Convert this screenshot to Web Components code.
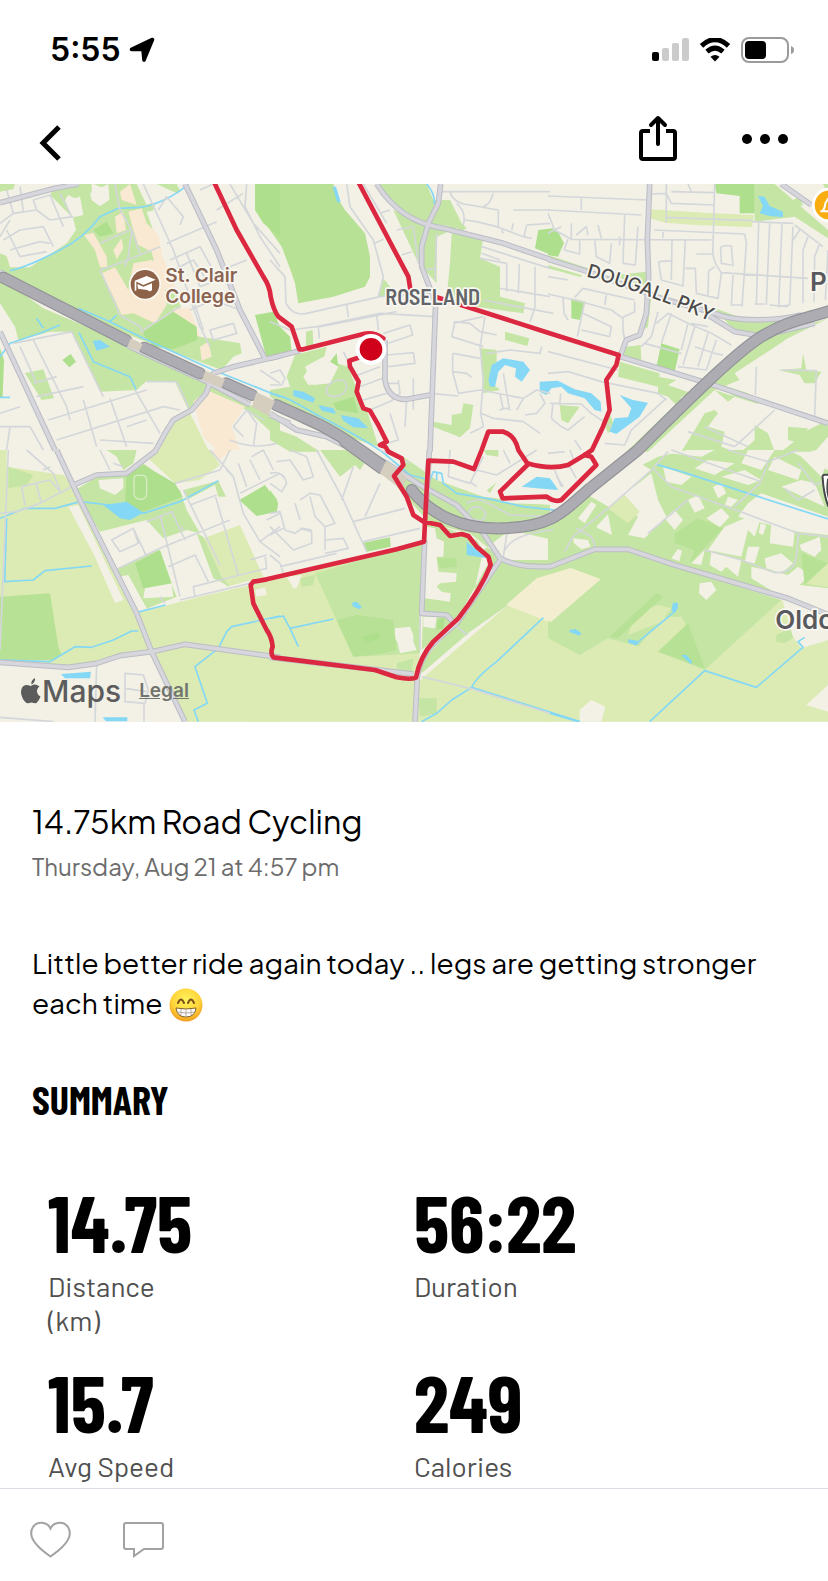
<!DOCTYPE html>
<html lang="en">
<head>
<meta charset="utf-8">
<meta name="viewport" content="width=device-width, initial-scale=1">
<title>14.75km Road Cycling</title>
<style>
    body {
        margin: 0;
        background: #fff;
        color: #000;
        font-family: "Inter", "Liberation Sans", sans-serif;
    }
</style>
</head>
<body>
<workout-page>
    <status-bar time="5:55"></status-bar>
    <nav-bar></nav-bar>
    <route-map></route-map>
    <workout-intro heading="14.75km Road Cycling" date="Thursday, Aug 21 at 4:57 pm">Little better ride again today .. legs are getting stronger each time <grin-face></grin-face></workout-intro>
    <workout-summary heading="Summary">
        <stat-item value="14.75" label="Distance" unit="(km)"></stat-item>
        <stat-item value="56:22" label="Duration"></stat-item>
        <stat-item value="15.7" label="Avg Speed"></stat-item>
        <stat-item value="249" label="Calories"></stat-item>
    </workout-summary>
    <action-bar></action-bar>
</workout-page>

<script>
customElements.define('workout-page', class extends HTMLElement {
    constructor() {
        super();
        this.attachShadow({ mode: 'open' });
    }

    connectedCallback() {
        this.shadowRoot.innerHTML = `
        <style>
            :host {
                display: flex;
                flex-direction: column;
                min-height: 100vh;
            }
        </style>
        <slot></slot>
        `;
    }
});

customElements.define('status-bar', class extends HTMLElement {
    constructor() {
        super();
        this.attachShadow({ mode: 'open' });
    }

    connectedCallback() {
        this.shadowRoot.innerHTML = `
        <style>
            :host {
                display: flex;
                justify-content: space-between;
                align-items: center;
                height: 100px;
                padding: 0 34px 0 50px;
            }
            div {
                display: flex;
                align-items: center;
                gap: 10px;
            }
            .clock { gap: 8px; }
            time {
                font-size: 32px;
                line-height: 40px;
                font-weight: 600;
            }
            svg { display: block; }
        </style>
        <div class="clock">
            <time>${this.getAttribute('time')}</time>
            <svg width="26" height="26" viewBox="0 0 26 26"><path d="M23.500 2.500 L15 23 L14 12.500 L2.500 12.500Z" stroke="#000" stroke-width="3.600" stroke-linejoin="round"/></svg>
        </div>
        <div>
            <svg width="37" height="24" viewBox="0 0 37 24">
                <rect y="14" width="7" height="9" rx="2"/>
                <g fill="#cbcbcb">
                    <rect x="10" y="10" width="7" height="13" rx="2"/>
                    <rect x="20" y="5" width="7" height="18" rx="2"/>
                    <rect x="30" width="7" height="23" rx="2"/>
                </g>
            </svg>
            <svg width="32" height="24" viewBox="0 0 32 24">
                <path d="M2.500 7.800 Q16 -4.500 29.500 7.800 M8 13.600 Q16 6.500 24 13.600" fill="none" stroke="#000" stroke-width="5"/>
                <path d="M16 23.500 L11.500 18.700 Q16 15.200 20.500 18.700Z"/>
            </svg>
            <svg width="53" height="26" viewBox="0 0 53 26">
                <rect x="1" y="1" width="46" height="24" rx="7" fill="none" stroke="#9b9b9b" stroke-width="2"/>
                <rect x="4" y="4" width="21" height="18" rx="4"/>
                <path d="M50 9 Q53 10 53 13 T50 17Z" fill="#9b9b9b"/>
            </svg>
        </div>
        `;
    }
});

customElements.define('nav-bar', class extends HTMLElement {
    constructor() {
        super();
        this.attachShadow({ mode: 'open' });
    }

    connectedCallback() {
        this.shadowRoot.innerHTML = `
        <style>
            :host {
                display: flex;
                justify-content: space-between;
                align-items: center;
                height: 84px;
                padding: 0 40px 0 32px;
            }
            div {
                display: flex;
                gap: 55px;
            }
            button {
                display: block;
                padding: 0;
                border: 0;
                background: none;
                cursor: pointer;
            }
            svg {
                display: block;
                fill: none;
                stroke: #000;
                stroke-width: 4;
            }
        </style>
        <button aria-label="Back"><svg width="40" height="48" viewBox="0 0 40 48"><path d="M27 9 L11 25 L27 41" stroke-width="5"/></svg></button>
        <div>
            <button aria-label="Share"><svg width="44" height="48" viewBox="0 0 44 48" overflow="visible"><path d="M17 13 H10 Q8 13 8 15 V39 Q8 41 10 41 H40 Q42 41 42 39 V15 Q42 13 40 13 H33"/><path d="M25 26 V1 M18 7 L25 0 L32 7" stroke-linecap="round" stroke-linejoin="round"/></svg></button>
            <button aria-label="More"><svg width="56" height="48" viewBox="0 0 56 48"><g fill="#000" stroke="none"><circle cx="15" cy="21" r="5"/><circle cx="33" cy="21" r="5"/><circle cx="51" cy="21" r="5"/></g></svg></button>
        </div>
        `;
    }
});

// Each tile is drawn from its own origin; layers are painted across all tiles in order.
const tiles = [
    {
        x: 0, y: -12,
        park: [
            'M0 12 H45 L40 28 0 35Z M0 220 L20 228 30 262 90 262 200 190 228 150 218 108 248 104 238 62 205 45 195 60 215 110 150 45 160 30 240 12 275 12 275 60 300 78 328 60 325 30 280 12 600 12 530 40 470 12 410 12 465 75 450 118 480 180 530 300 545 390 600 470 720 490 725 520 700 530 665 570 425 480 235 405 0 285Z',
            'M0 292 L130 385 400 500 620 605 760 680 840 720 840 780 740 690 640 655 590 660 565 690 525 605 440 602 410 630 300 635 215 455 150 455 55 480 45 440 0 370Z M75 580 L130 568 162 655 125 660Z'
        ],
        land: [
            'M270 40 L325 12 328 55 300 78 275 60Z M205 60 L240 50 250 105 220 112Z M440 95 L475 90 540 60 590 100 640 250 730 480 600 470 545 390 530 340 490 240Z M530 12 L650 12 800 420 700 470 600 150Z M410 12 H470 L480 60 440 75Z'
        ],
        sand: [
            'M385 95 L425 85 440 130 475 165 490 240 525 300 520 340 480 320 455 215 415 195 400 150Z M345 110 L370 95 378 150 350 160Z M252 165 L280 158 320 230 322 260 300 262 285 210Z M305 280 L345 262 385 330 400 250 455 240 490 260 500 375 465 430 400 400 365 405 335 340Z M360 35 L390 12 410 75 365 60Z M520 385 L570 385 600 470 520 440Z M600 500 L625 485 635 530 605 542Z M340 210 L365 175 370 205 350 238Z',
            'M580 665 L620 630 735 680 695 740 720 810 650 810 610 770Z'
        ],
        farm: ['M495 740 L570 700 625 810 480 810Z'],
        lush: ['M425 458 L520 395 590 440 592 480 520 508 460 500Z M187 540 L212 522 228 545 208 562Z M765 405 L820 395 840 440 840 520 800 535Z M765 12 H840 V170 L790 130 765 90Z M0 505 L12 540 8 650 0 655Z M320 125 L340 160 300 170 280 150Z'],
        lake: ['M278 482 L300 480 330 500 290 512Z'],
        stream: ['M30 272 C80 262 130 235 180 210 S270 150 300 110 L355 85 420 82 C470 75 530 45 565 12 M0 652 H30 M0 530 L30 490 120 460 180 435 M110 415 L130 445 M235 385 L330 425 430 475 640 570 840 650 M330 425 L350 405 M237 458 L280 545 390 590 408 628'],
        street: [
            'M0 130 L40 100 110 90 150 120 M10 180 L60 150 130 140 M30 210 L120 185 150 190 M20 150 L60 230 140 215 M40 100 L20 30 M70 95 L60 20 M110 90 L100 60 150 45 190 140 M0 170 L30 120 M150 120 L220 110 M180 40 L215 110 M130 140 L160 200',
            'M345 12 L360 90 395 150 385 230 375 260 M300 190 L390 150 M300 270 L370 245 480 200 M300 270 L360 405 420 440 430 460 M430 450 L540 380 M395 150 L420 220',
            'M430 12 L520 210 600 440 630 500 M475 90 L500 50 550 110 540 135 M500 190 L650 125 M510 240 L600 200 650 290 M520 270 L580 240 620 300 M560 220 L600 320 M570 390 L640 360 720 390 M600 320 L680 290 M580 360 L610 450 M630 450 L700 430 710 460 640 480Z M650 90 L730 40 M690 12 L760 130 840 220 M740 12 L735 80 780 170 840 260 M690 260 L740 240',
            'M40 490 L215 455 310 650 M100 480 L200 680 M60 500 L110 610 M100 610 L170 590 M110 650 L250 620 M145 720 L440 630 M170 780 L490 680 M200 680 L210 720 M250 660 L290 800 M330 655 L380 800 M405 630 L480 760 M440 605 L530 605 570 690 M380 740 L440 720 M300 780 L460 790 M0 700 L60 680 M0 740 L90 740 130 810 M30 740 L20 810 M490 680 L540 690',
            'M700 740 L740 690 790 720 M700 740 L730 770 M740 690 L770 730 760 800 M690 780 Q760 810 830 790 M780 570 L840 610 M600 30 L640 12'
        ],
        road: ['M0 455 L165 810', 'M555 12 L650 210 720 390 795 535', 'M0 68 L165 25 235 12', 'M840 528 L700 560 640 580 618 640 575 690 520 720 495 760 465 815', 'M0 275 L120 355 400 505 620 605 750 674', 'M810 705 L870 730'],
        highway: ['M10 293 L380 482', 'M433 503 L600 580', 'M678 610 L756 645']
    },
    {
        x: 810, y: -12,
        park: [
            'M320 12 H470 L490 60 540 60 575 130 590 145 570 155 560 140 470 130 400 100 360 60Z M370 90 L480 135 570 140 500 170 500 310 455 260 445 250Z M545 160 L640 170 630 235 690 260 690 350 765 370 760 400 620 380 530 350 540 250Z',
            'M75 525 L170 500 160 545 120 560 100 590 115 615 170 610 200 550 235 560 265 640 290 690 310 750 325 800 200 760 80 700 0 650 V630 L60 620 50 590Z M340 295 L380 345 325 350Z M705 455 L778 475 772 498 705 480Z M630 505 L680 510 680 560 655 600 690 630 640 640Z M490 725 L545 735 545 705 575 700 580 670 610 675 600 745 570 772 490 740Z M0 740 L80 770 150 815 60 815 0 780Z M108 455 L128 450 130 495 108 500Z'
        ],
        land: ['M105 560 L170 525 205 560 180 610 130 615Z'],
        golf: ['M-45 12 H190 L200 50 225 90 285 160 300 230 300 290 285 320 190 350 85 370 75 310 65 280 35 200 0 150 -45 90Z'],
        lush: ['M0 410 L60 470 65 515 0 530Z M190 670 L250 650 265 700 200 690Z M805 150 L850 145 850 228 795 205Z M180 545 L200 520 205 560Z'],
        lake: ['M655 600 L665 555 700 535 760 545 780 570 755 605 735 590 738 565 705 555 685 575 675 620 660 620Z M70 630 L100 635 135 655 130 668 70 648Z M145 675 L190 685 198 702 155 692Z M212 705 L265 715 295 745 250 742 220 722Z M188 20 L198 20 212 65 202 68Z'],
        stream: ['M0 640 C60 650 110 690 160 715 S270 770 335 815', 'M470 12 Q495 40 493 72'],
        street: [
            'M0 240 L45 290 48 370 Q70 410 110 400 L330 350 490 340 M230 12 L240 80 310 180 340 290 325 350 M0 425 L60 450 140 440 330 400 495 410 M230 375 L235 412 M320 400 L325 450 M145 440 L148 475 M150 440 L380 395 M280 12 L350 130 M330 100 L360 90 M315 190 L340 178 M395 225 L425 215',
            'M380 150 L430 140 445 250 M500 160 L495 300 M470 268 L495 265 M515 35 H840 M540 35 Q550 70 600 75 L685 90 V140 M670 40 Q660 75 640 80 M585 120 L620 125 680 140 760 170 785 175 M730 90 H840 M770 135 L840 130 M770 135 L762 170 M730 130 L725 150 M560 70 Q590 95 580 135 M695 150 L700 160',
            'M635 200 L840 265 M635 220 L690 240 M710 250 V335 M748 252 L745 340 M690 325 L840 350 M795 260 V380 L780 425 M630 235 L710 250 M640 360 L850 400',
            'M645 410 L630 500 640 600 632 700 670 715 760 725 810 760 M550 430 L640 410 M545 470 L555 425 600 430 630 455 680 465 M545 470 L640 500 M550 520 L630 535 M548 520 V575 L590 580 605 592 M548 575 L565 640 630 630 760 655 800 630 840 640 M650 520 L720 510 810 520 815 500 M700 580 L718 685 M688 690 Q710 680 722 690 M690 640 L700 690 M760 655 L740 690 M810 640 L825 670 800 700 765 705 M480 640 L565 648 M632 700 L640 740 600 760',
            'M340 460 L420 435 428 465 355 490 M350 525 L430 518 435 550 355 560 M270 620 L350 590 M280 660 L350 640 M300 690 L370 660 M430 595 V690 M385 600 L390 640 365 660 M355 610 H385 M410 660 L405 740 M360 700 L385 780 350 790 M220 515 L235 545 M250 590 L330 560 M0 580 L30 570 45 595 35 615 0 615 M170 625 Q180 600 220 600 Q240 620 220 640 Q190 660 170 640Z'
        ],
        road: ['M320 12 C370 90 430 130 520 145 L700 190 840 238', 'M512 12 L505 70 475 130 455 200 455 260 497 370 480 815', 'M0 535 L90 512', 'M345 480 V600 Q355 660 410 658 L480 645', 'M0 700 L80 750 170 770 260 815'],
        highway: ['M18 675 L100 712 C180 745 230 780 335 855']
    },
    {
        x: 1644, y: -12,
        park: [
            'M620 12 H680 L840 150 V175 L740 110 620 125Z M235 500 L278 495 280 545 225 530Z M215 545 L335 580 330 620 210 590Z M500 385 L600 420 720 410 640 465 560 455Z M840 415 L720 475 560 580 575 600 500 630 300 815 235 815 500 560 640 480Z M290 395 L310 350 300 440 285 450Z M200 285 L295 275 300 320 240 305Z M0 225 L120 265 110 275 0 240Z M0 255 L100 285 100 292 0 265Z',
            'M690 570 L760 565 765 520 775 570 820 575 800 610 770 610 755 585Z M35 675 L95 680 60 730 40 720Z M165 720 L185 700 200 740 180 760Z',
            'M330 590 L385 600 360 615 430 640 400 650 390 680 360 650 330 640Z M500 630 L560 650 540 665Z M480 600 L600 640 640 660 630 672 560 650Z',
            'M440 750 L470 700 500 690 510 700 480 740 530 755 520 800 560 815 400 815Z M720 740 L780 745 760 790 720 780Z M620 735 L660 760 680 815 580 815 620 780Z M780 750 L840 720 V770 L800 815 700 815Z M825 12 H840 V45Z M735 60 L755 50 765 75 745 85Z'
        ],
        farm: ['M308 88 L498 100 618 105 612 142 440 135 350 128 308 115Z'],
        lush: ['M500 12 H620 V100 H575 V48 L505 40Z M0 148 L30 155 48 190 30 230 0 225Z M70 355 L112 365 95 420 70 415Z M340 490 L395 508 380 575 325 560Z'],
        lake: ['M-25 605 L30 602 80 628 130 640 158 665 160 695 140 690 110 655 60 640 40 620 10 625 -5 645 -25 635Z M215 645 L255 660 300 668 275 710 205 762 185 755 200 715 240 712 250 685Z M630 48 L650 50 665 78 705 95 705 112 665 108 635 100 645 78Z'],
        street: [
            'M0 48 L300 60 M0 90 L280 105 M100 50 V90 M0 100 L20 150 70 178 M0 160 L40 140 M70 130 V178 L490 180 M85 165 L115 140 120 165 M140 175 L145 230 185 250 190 190 M150 135 L160 175 M215 170 V195 M230 105 L225 250 262 255 270 140 M48 210 L95 222 V180 M60 178 L48 210',
            'M355 12 L355 128 M310 42 L355 40 370 70 500 75 M370 35 L500 38 M420 12 L430 35 M500 12 L495 200 Q490 240 520 278 L780 295 M355 112 L612 122 M318 150 L590 162 595 190 582 380 M345 150 V175 M372 180 L370 300 M332 245 L370 242 M332 245 L340 300 405 318 412 180 M412 265 H442 L445 340 510 355 520 280 M445 222 H492 M482 270 L480 350 M518 205 Q520 195 550 198 L555 260 M518 205 L520 250 550 255 M480 275 L500 260 M580 375 H550 L555 285',
            'M632 128 L625 375 M665 130 L655 375 M702 132 L692 380 725 375 735 140 M740 135 L825 200 M620 372 H650 M665 375 L720 380 M755 150 L735 180 M780 170 L765 210 V370 M815 190 L800 230 798 365 M840 210 L832 360 M612 125 L735 130',
            'M0 342 L80 360 190 390 225 415 225 450 230 480 M80 352 L105 325 260 360 M175 345 L170 375 M260 365 V395 L225 412 M105 400 L190 440 185 470 100 450 M110 365 L88 470 M45 350 L48 400 60 420 M0 290 L60 300 M330 395 L310 470 280 500 M325 430 L360 400 420 430 400 510 M370 400 L340 490 M290 490 L400 520 M420 430 L490 460 550 495 M440 440 L405 555 M480 460 L450 560 M505 480 L475 570 390 560 M440 500 L500 520 525 525 M430 430 L480 440 M0 515 L210 570 M0 580 L60 575 160 605 330 640 355 660 M355 655 L250 750 230 795 170 790 M5 670 L100 672 130 700 190 740 M10 715 L40 740 60 750 110 710 M15 670 L10 715 M38 640 L35 675 M80 780 L100 810 M625 560 L622 645 M700 570 L805 572 800 710 M680 690 L560 800 M420 755 L560 800 M470 740 L600 800'
        ],
        road: ['M700 12 L790 75', 'M0 238 L120 275 340 355 500 400 C570 430 700 420 760 405', 'M480 405 L560 455 640 468 800 430', 'M305 12 L298 180 302 290 295 400 275 465 235 480 218 525', 'M218 530 L480 610 840 730'],
        highway: []
    },
    {
        x: 0, y: 798,
        farm: ['M0 0 H20 V50 L190 75 220 105 245 150 455 605 350 620 200 650 0 635Z M410 490 L600 440 840 385 V815 H560 L455 605Z M440 20 L480 0 630 0 660 45 600 90 525 100Z M610 265 L720 225 790 380 680 410Z'],
        park: ['M25 50 L100 75 80 105 25 115Z M225 120 L300 75 380 70 430 40 540 120 560 180 600 250 560 240 490 265 440 210 300 245Z M320 0 H410 L400 40 370 60 350 20Z M345 360 L475 300 530 440 430 480Z M590 250 L610 260 665 380 690 410 640 385Z M550 120 L655 92 678 140 655 140 645 105 560 150Z'],
        golf: ['M0 440 L150 430 175 590 185 615 160 630 0 630Z'],
        lush: ['M380 75 L430 45 525 100 548 140 430 185 375 160Z M405 340 L480 300 515 400 430 415Z M718 150 L795 105 835 160 830 185 770 198Z'],
        land: ['M295 90 L370 85 370 115 345 135 300 115Z M205 170 L235 165 370 450 345 460 285 320Z M435 415 L515 400 520 440 430 445Z M355 380 L385 375 440 475 410 490Z M765 420 L795 412 800 435 770 440Z'],
        sand: ['M635 0 H700 L655 30Z'],
        lake: ['M310 165 L380 155 430 188 390 210 360 205Z M183 672 L273 665 270 685 195 685Z M308 802 H382 V814 H318Z'],
        stream: ['M0 205 L75 175 165 175 240 155 330 165 430 190 540 155 655 92 M20 205 L14 395 100 390 135 362 275 348 M0 630 L150 635 225 590 275 592 340 570 395 543 415 543 M408 488 L497 465 M410 490 L425 540 M840 498 L695 530 680 545 655 595 585 650 622 760 582 780 595 815'],
        street: [
            'M25 0 L0 600 M0 190 L50 185 120 160 215 110 M65 110 L150 90 185 130 M65 110 L75 165 M108 100 L125 160 M80 0 L160 70 180 120 M130 60 L150 50 M300 0 L330 60 M340 40 L370 50',
            'M400 235 L440 320 M335 270 L400 235 415 280 360 305Z M345 360 L480 295 690 210 M440 215 L515 185 555 270 M480 195 L540 440 M505 350 L585 315 625 395 M570 165 L650 135 M550 120 L660 345 M645 135 L715 375 M540 450 L750 400 M585 440 L580 410 800 355 795 315 M630 0 L700 80 730 190 780 275 840 320 M700 80 L680 60 M715 40 L740 110 M755 20 L790 0 820 60 M750 30 L780 90 M720 130 L840 70 M800 210 L840 190 M780 275 L840 230 M525 100 L660 60 690 0 M495 460 L480 440 M750 330 L800 315',
            'M290 645 L285 815 M375 670 L430 675 445 720 435 760 375 755Z M375 715 L440 725 M432 762 V815 M0 802 L160 815 M545 230 L550 240'
        ],
        road: ['M0 637 L205 652 290 640 360 617 455 605 555 583 840 622', 'M225 103 L290 75 380 70 470 0', 'M170 0 L240 150 410 490 455 605 555 815'],
        track: ['M402 85 Q402 78 410 76 H430 Q440 78 440 90 V130 Q440 148 422 148 Q402 148 402 130Z']
    },
    {
        x: 810, y: 798,
        farm: ['M-60 405 L462 275 440 815 H-60Z M440 700 L720 460 840 500 V815 H435Z'],
        park: ['M150 0 H240 L290 30 270 60 255 45 210 80Z M135 370 L460 278 450 610 370 615 250 620Z M470 215 L520 230 620 270 660 330 560 510 455 600Z M455 670 L600 545 850 370 V270 L720 240 640 300 600 480 450 640Z M400 20 L500 90 640 140 840 165 V330 L700 330 600 250 480 220 380 110Z M445 745 H500 V790 L450 800Z M90 385 L135 375 130 405 95 410Z M380 640 L430 625 425 670 380 655Z M640 0 H685 V20 L650 15Z M630 105 L680 95 660 130Z'],
        wheat: ['M708 465 L800 385 900 355 992 388 835 515Z'],
        golf: ['M200 510 L260 495 370 510 380 600 330 612 250 620Z M500 325 H560 V350 L510 355Z'],
        lush: ['M280 278 L360 262 362 290 290 305Z M0 120 L22 150 20 170 0 175Z M502 510 L525 500 520 535 500 540Z M275 560 L325 548 330 565 290 580Z'],
        land: ['M470 230 L495 235 500 265 522 275 520 320 500 320 505 365 560 370 558 395 510 400 500 410 515 425 542 430 540 455 465 445Z M375 535 L420 530 430 555 430 575 440 600 390 610 382 575 370 560Z M50 380 L95 375 80 415 70 415Z M460 500 L500 500 495 535 460 530Z M530 90 L600 60 700 80 640 130 560 110Z M690 150 L860 150 880 165 720 160Z'],
        lake: ['M590 275 L650 325 590 315Z M245 458 L260 455 275 470 270 478 250 470Z M755 110 L800 80 840 85 865 120 800 115Z'],
        stream: ['M330 0 L420 75 480 90 490 65 515 70 520 100 560 130 650 145 760 170 870 182 M500 65 V90 M0 505 L40 498 60 535 85 590 M60 535 L190 507 M455 815 L500 790 545 750 605 712 Q620 680 680 635 L820 503 M605 712 L930 815'],
        street: [
            'M0 70 Q40 60 50 100 L35 125 0 100 M20 35 L60 30 100 90 130 80 110 20 60 0 M140 0 L220 150 290 305 M250 50 L215 150 M330 0 L420 40 M330 100 L285 200 M250 215 L405 175 M280 275 L450 235',
            'M0 190 L30 185 45 240 75 250 95 235 125 240 M0 230 L70 300 125 280 125 245 90 235 M75 160 L90 210 M90 150 L120 130 150 135 195 220 165 230 M120 140 L135 200 165 230 165 300 M165 270 L220 265 235 295 165 310 M30 350 L200 310 M0 315 L30 340 40 370 M0 255 L40 235',
            'M540 0 L535 80 600 100 640 20 M600 95 L620 110 M620 60 L680 75 800 0 M700 0 L720 40 M455 680 L600 715 840 790 M450 490 V600 M590 160 Q625 140 655 160 L720 195 840 200 M592 190 Q620 150 648 190 Q640 220 620 210 Q590 205 592 190 M700 320 L710 255 M705 300 Q730 250 850 240 M560 530 L592 555 M860 80 L880 110 M900 0 L915 40'
        ],
        road: ['M0 622 L430 672', 'M478 0 L470 150', 'M464 270 L455 490 530 495 560 528', 'M435 815 L442 680 C455 600 500 570 560 520 L690 330', 'M230 -20 L350 40 450 105 560 165 640 250 690 325 C740 350 780 350 840 350 L974 298 1074 298 1214 345 1554 445 1690 500'],
        highway: ['M225 -25 L335 55', 'M425 120 C480 190 570 240 700 235 S860 205 960 115 L1104 0 C1234 -130 1394 -290 1474 -340 S1600 -390 1720 -430']
    },
    {
        x: 1644, y: 798,
        farm: ['M0 500 L0 815 H850 V500 L700 450Z'],
        park: ['M0 220 L120 130 330 20 420 0 H720 L840 60 V500 L700 440 380 345 240 298 140 298 0 340Z M0 300 L140 305 240 305 400 355 700 450 470 660 330 605 180 565 95 615 0 565Z M685 555 L740 530 740 560 710 580 685 575Z M820 540 L840 535 V570Z'],
        wheat: ['M-30 385 L70 355 158 388 10 515 0 510Z'],
        land: [
            'M110 130 L260 30 310 60 190 175Z M310 70 L330 150 355 200 290 265 240 255 270 200 215 145Z M350 205 L380 180 405 210 380 240Z M420 150 L450 135 470 175 440 188Z M475 205 L520 175 545 200 515 232Z M495 110 L520 100 535 130 510 145Z M345 50 L430 80 400 105 355 95Z M365 10 L460 20 500 0 420 0Z M440 55 L500 75 560 40 480 30Z M520 80 L600 105 640 90 590 60Z M540 140 L570 150 550 170 530 165Z M600 160 L640 130 840 200 V255 L750 245 570 200Z M660 60 L750 90 760 60 680 20Z M700 110 L830 170 800 100 760 90Z M760 20 L820 80 840 30 800 0Z M580 40 L640 60 680 0 600 0Z',
            'M530 230 L590 205 635 215 620 260 600 240 580 320 480 300Z M638 220 L655 225 645 255 632 250Z M670 220 L740 245 735 290 665 280Z M490 305 L580 330 570 380 535 350 520 365 485 345Z M650 325 L700 310 735 340 700 370 655 355Z M600 290 L635 290 620 340 590 335Z M145 230 L180 192 192 255 150 235Z M90 205 L130 155 145 165 110 220Z M755 285 L815 260 820 300 800 320 760 300Z M370 325 L390 297 402 302 394 334Z M430 340 L470 300 460 345Z M455 400 L490 395 505 420 475 450 453 430Z M610 350 L720 375 750 350 785 375 755 405 840 415 V570 L760 595 735 560 700 440 610 385Z M75 265 L120 270 128 290 100 298 78 280Z',
            'M95 780 L130 750 172 770 160 815 H95Z M775 765 L840 705 V785Z'
        ],
        field: ['M180 175 L230 135 275 185 240 220Z M765 400 L840 340 V412Z M240 555 L260 490 330 465 370 475 350 500 400 500 415 525 330 605 270 590 330 520Z'],
        golf: ['M380 250 L450 205 525 235 425 340 440 300 380 280Z M330 605 L420 520 470 655Z M185 560 L325 430 345 440 210 565Z M760 310 L840 340 770 405Z'],
        lake: ['M375 458 H390 V472 L382 488 370 482Z M240 568 L268 572 272 582 262 586 241 578Z M65 540 L83 537 100 550 95 557 64 546Z M400 616 L415 614 433 636 428 642Z'],
        stream: ['M325 43 L410 68 600 130 840 207 M265 580 L380 485 M305 815 L470 662 625 712 765 592 750 575 770 562 M0 788 L90 815'],
        street: [
            'M50 305 L75 260 180 175 310 60 360 5 M85 235 L130 260 142 290 M315 55 L370 110 590 190 750 250 840 260 M370 0 L640 95 M540 0 L660 35 750 0 M640 95 L560 170 M660 35 L640 90 M750 40 L800 105 840 90 M710 115 L750 150 800 120 M300 250 L420 150 M470 300 L580 330 680 368 Q740 370 745 320 L752 250 M0 10 L50 5 M20 60 L40 110 M60 40 L85 85'
        ],
        road: []
    }
];

const layers = ['farm', 'park', 'wheat', 'land', 'sand', 'field', 'golf', 'lush', 'lake', 'stream', 'street', 'track', 'road-edge', 'road', 'highway-edge', 'highway'];

const route = [
    'M645 0 L710 138 790 278 Q810 308 812 338 820 378 835 398 L875 428 898 496 910 496 1090 450 Q1120 443 1150 463',
    'M1078 0 L1225 278 1233 328',
    'M1075 521 L1048 530 1050 548 1076 593 1070 623 1090 673 1110 680 1135 723 1160 773 1140 783 1156 788 1165 803 1205 823 1210 843 1182 876 1220 938 1240 993 1270 1013 1320 1023 1350 1056 1385 1050 1405 1056 1430 1088 1465 1118 1472 1143 C1450 1198 1410 1258 1375 1303 L1300 1373 Q1260 1418 1248 1481 1230 1488 1190 1480 L1125 1458 820 1420 Q810 1408 818 1388 815 1358 800 1338 L760 1258 752 1203 760 1193 800 1186 1190 1096 1272 1073 1280 918 1285 830 1360 833 1422 855 1445 798 1465 743 1510 743 Q1545 753 1555 798 L1582 838 Q1650 858 1704 843 L1754 813 1776 798 1809 728 1829 678 1819 588 1849 543 1856 513 1644 446 1400 368 1310 340',
    'M1582 843 L1500 923 1508 943 1640 938 Q1664 956 1684 948 L1789 843 1774 818 1754 813'
];

customElements.define('route-map', class extends HTMLElement {
    constructor() {
        super();
        this.attachShadow({ mode: 'open' });
    }

    connectedCallback() {
        const drawing = layers.map(layer => {
            const key = layer.replace('-edge', '');
            return tiles.map(tile => (tile[key] || []).map(d =>
                `<path class="${layer}" transform="translate(${tile.x} ${tile.y})" d="${d}"/>`
            ).join('')).join('');
        }).join('');

        this.shadowRoot.innerHTML = `
        <style>
            :host {
                display: block;
                position: relative;
                overflow: hidden;
            }
            .map {
                display: block;
                width: 100%;
                height: auto;
                background: #f3f1e6;
            }
            .farm, .field { fill: #dcebb4; }
            .park { fill: #c5e5a5; }
            .wheat { fill: #f3eecf; }
            .land { fill: #f3f1e6; }
            .sand { fill: #f9e9d2; }
            .golf { fill: #b7e194; }
            .lush { fill: #addf8c; }
            .lake { fill: #84d8f5; }
            .stream, .street, .track, .road, .road-edge, .highway, .highway-edge, .route {
                fill: none;
                stroke-linejoin: round;
            }
            .stream { stroke: #84d8f5; stroke-width: 5; }
            .street { stroke: #d4d7da; stroke-width: 5; }
            .track { stroke: #d8edc4; stroke-width: 4; }
            .road-edge { stroke: #bbbdc5; stroke-width: 17; }
            .road { stroke: #d6d6dc; stroke-width: 11; }
            .highway-edge { stroke: #929298; stroke-width: 36; stroke-linecap: round; }
            .highway { stroke: #acacb2; stroke-width: 29; stroke-linecap: round; }
            .route { stroke: #dc2740; stroke-width: 14; stroke-linecap: round; }
            text {
                paint-order: stroke;
                stroke: #f8f7f0;
                stroke-width: 10;
                stroke-linejoin: round;
                font-family: "Inter", sans-serif;
            }
            .college { fill: #8b6351; font-size: 57px; font-weight: 600; }
            .area { fill: #626469; font: 600 66px "Barlow Semi Condensed", "Barlow", "Roboto", sans-serif; }
            .street-name { fill: #4a4a4a; font-size: 56px; font-weight: 500; }
            .town { fill: #58595d; font-size: 78px; font-weight: 600; }
            .credit {
                position: absolute;
                left: 20px;
                bottom: 11px;
                display: flex;
                align-items: center;
                color: #5c5c5c;
            }
            .credit svg { fill: #5c5c5c; }
            .credit span {
                font-size: 30px;
                font-weight: 500;
                line-height: 40px;
            }
            .credit a {
                margin-left: 18px;
                color: #72746f;
                font-size: 19px;
                font-weight: 600;
                line-height: 40px;
            }
        </style>
        <svg class="map" viewBox="0 0 2484 1614" role="img" aria-label="Route map">
            ${drawing}
            <g fill="#d5cdbd">
                <path d="M393 463 L428 480 418 502 382 488Z M616 560 L675 585 664 612 606 588Z M770 625 L825 650 805 695 755 668Z M1158 830 L1222 880 1205 918 1140 868Z"/>
            </g>
            ${route.map(d => `<path class="route" d="${d}"/>`).join('')}
            <circle cx="1113" cy="496" r="46" fill="#fff"/>
            <circle cx="1113" cy="496" r="34" fill="#d0021b"/>

            <circle cx="435" cy="301" r="48" fill="#fbf8f2"/>
            <circle cx="435" cy="301" r="43" fill="#8e6248"/>
            <path fill="#fff" d="M404 290 L440 276 467 287 430 303Z M412 300 L430 308 456 298 V318 Q450 326 442 318 L414 314Z M404 292 h5 v28 h-5z"/>

            <circle cx="2488" cy="63" r="52" fill="#fff"/>
            <circle cx="2488" cy="63" r="44" fill="#f9ad10"/>
            <path d="M2461 82 H2500 M2468 80 Q2475 73 2476 58 L2486 42" fill="none" stroke="#fff" stroke-width="6"/>
            <path d="M2520 872 H2475 Q2466 872 2468 882 Q2471 930 2484 965 H2520Z" fill="#fff" stroke="#46484b" stroke-width="6"/>
            <path d="M2484 884 Q2478 920 2486 942" fill="none" stroke="#46484b" stroke-width="5"/>

            <path id="dougall" d="M1758 278 Q1950 330 2160 425" fill="none"/>
            <text class="college" x="496" y="294">St. Clair</text>
            <text class="college" x="496" y="356">College</text>
            <text class="area" x="1156" y="364">ROSELAND</text>
            <text class="street-name"><textPath href="#dougall">DOUGALL PKY</textPath></text>
            <text class="town" x="2430" y="320">P</text>
            <text class="town" x="2326" y="1334">Oldc</text>
        </svg>
        <div class="credit">
            <svg width="22" height="26" viewBox="0 0 22 26"><path d="M15 0 Q15.500 4 11.500 6.500 Q10.500 2.500 15 0Z M11 8 Q15 5 19.500 8.500 Q16.500 11 17 14 Q17.500 17 20.500 18.500 Q19 23 16.500 25 Q15 25.500 11.500 24.500 Q8 25.500 6.500 25 Q2 21.500 1 15 Q1 7.500 6 7 Q8 7 11 8Z"/></svg>
            <span>Maps</span>
            <a href="#legal">Legal</a>
        </div>
        `;
    }
});

customElements.define('grin-face', class extends HTMLElement {
    constructor() {
        super();
        this.attachShadow({ mode: 'open' });
    }

    connectedCallback() {
        this.shadowRoot.innerHTML = `
        <style>
            :host {
                display: inline-block;
                margin-left: 2px;
                vertical-align: middle;
            }
            svg { display: block; }
        </style>
        <svg width="34" height="38" viewBox="0 0 34 38" role="img" aria-label="Grinning face">
            <defs><radialGradient id="skin" cx=".5" cy=".35" r=".65"><stop offset="0" stop-color="#fff45c"/><stop offset=".65" stop-color="#ffd33a"/><stop offset="1" stop-color="#f29a1c"/></radialGradient></defs>
            <circle cx="17" cy="17" r="16.500" fill="url(#skin)"/>
            <path d="M9 15 Q12 8 15 15 M19 15 Q22 8 25 15" fill="none" stroke="#80501c" stroke-width="2" stroke-linecap="round"/>
            <path d="M7 20 Q17 22 27 20 Q26 29 17 29 T7 20Z" fill="#fff" stroke="#85622f"/>
            <path d="M8 24 Q17 26 26 24 M12 21 V27 M17 22 V29 M22 21 V27" fill="none" stroke="#b4aaa0"/>
        </svg>
        `;
    }
});

customElements.define('workout-intro', class extends HTMLElement {
    constructor() {
        super();
        this.attachShadow({ mode: 'open' });
    }

    connectedCallback() {
        this.shadowRoot.innerHTML = `
        <style>
            :host {
                display: block;
                padding: 77px 32px 0;
                font-family: "Plus Jakarta Sans", "Inter", sans-serif;
            }
            h1, p { margin: 0; font-weight: 400; }
            h1 { font-size: 32px; line-height: 44px; }
            .date {
                color: #6c6c6c;
                font-size: 24px;
                line-height: 46px;
            }
            .text {
                margin-top: 54px;
                font-size: 28px;
                line-height: 40px;
            }
        </style>
        <h1>${this.getAttribute('heading')}</h1>
        <p class="date">${this.getAttribute('date')}</p>
        <p class="text"><slot></slot></p>
        `;
    }
});

customElements.define('workout-summary', class extends HTMLElement {
    constructor() {
        super();
        this.attachShadow({ mode: 'open' });
    }

    connectedCallback() {
        this.shadowRoot.innerHTML = `
        <style>
            :host {
                display: block;
                flex: 1;
                padding: 51px 32px 0;
            }
            h2 {
                margin: 0;
                font: bold 40px/44px "Barlow Condensed", "Roboto", sans-serif;
                text-transform: uppercase;
            }
            div {
                display: grid;
                grid-template-columns: 1fr 1fr;
                row-gap: 24px;
                padding: 60px 16px 0;
            }
        </style>
        <h2>${this.getAttribute('heading')}</h2>
        <div><slot></slot></div>
        `;
    }
});

customElements.define('stat-item', class extends HTMLElement {
    constructor() {
        super();
        this.attachShadow({ mode: 'open' });
    }

    connectedCallback() {
        const unit = this.getAttribute('unit');
        this.shadowRoot.innerHTML = `
        <style>
            :host { display: block; }
            p { margin: 0; }
            .value {
                margin-bottom: 8px;
                font: bold 80px/80px "Barlow Condensed", "Roboto", sans-serif;
            }
            .label {
                color: #505050;
                font: 28px/34px "Barlow", "Roboto", sans-serif;
            }
        </style>
        <p class="value">${this.getAttribute('value')}</p>
        <p class="label">${this.getAttribute('label')}</p>
        ${unit ? `<p class="label">${unit}</p>` : ''}
        `;
    }
});

customElements.define('action-bar', class extends HTMLElement {
    constructor() {
        super();
        this.attachShadow({ mode: 'open' });
    }

    connectedCallback() {
        this.shadowRoot.innerHTML = `
        <style>
            :host {
                display: flex;
                gap: 50px;
                height: 61px;
                padding: 31px 29px 0;
                border-top: 1px solid #dcdce4;
            }
            button {
                display: block;
                height: 40px;
                padding: 0;
                border: 0;
                background: none;
                cursor: pointer;
            }
            svg {
                display: block;
                fill: none;
                stroke: #a2a2a2;
                stroke-width: 2;
            }
        </style>
        <button aria-label="Like"><svg width="43" height="38" viewBox="0 0 43 38"><path d="M21.500 7.500 C25 0 35 0 39 6 C44 14 40 23 21.500 35.500 C3 23 -1 14 4 6 C8 0 18 0 21.500 7.500Z"/></svg></button>
        <button aria-label="Comment"><svg width="43" height="38" viewBox="0 0 43 38"><path d="M4 2 H39 Q41 2 41 4 V26 Q41 28 39 28 H22 L12 35 V28 H4 Q2 28 2 26 V4 Q2 2 4 2Z"/></svg></button>
        `;
    }
});
</script>
</body>
</html>
